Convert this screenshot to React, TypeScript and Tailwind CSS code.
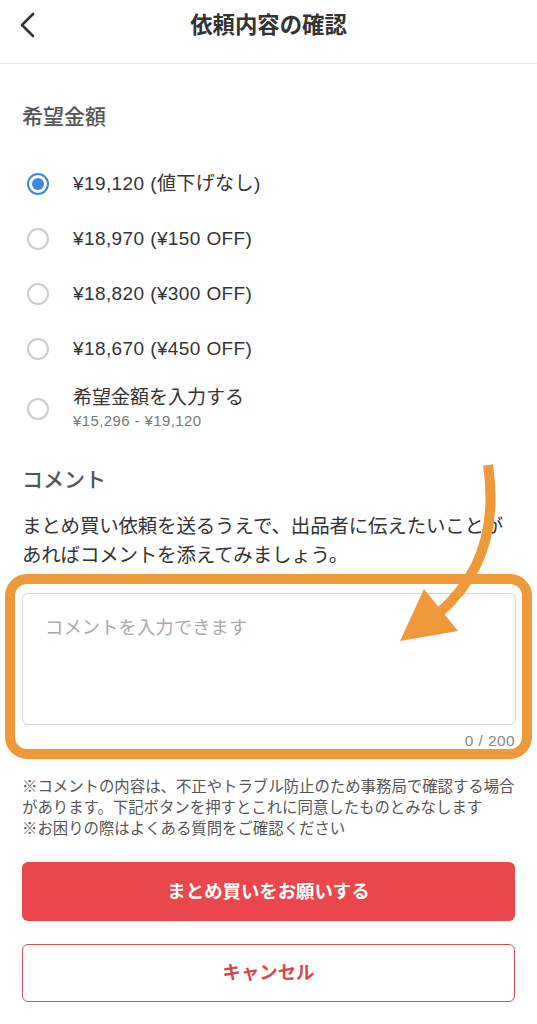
import { useState } from "react";

const options = [
  { label: "¥19,120 (値下げなし)" },
  { label: "¥18,970 (¥150 OFF)" },
  { label: "¥18,820 (¥300 OFF)" },
  { label: "¥18,670 (¥450 OFF)" },
];

function Radio({ checked }: { checked: boolean }) {
  if (checked) {
    return (
      <span className="grid size-[22px] shrink-0 place-items-center rounded-full border-2 border-[#3d87de] bg-white">
        <span className="size-[12px] rounded-full bg-[#3d87de]" />
      </span>
    );
  }
  return <span className="size-[22px] shrink-0 rounded-full border-2 border-[#cdcdcd] bg-white" />;
}

export default function App() {
  const [selected, setSelected] = useState(0);
  const [comment, setComment] = useState("");

  return (
    <div
      className="relative min-h-[1024px] w-[537px] overflow-hidden bg-white text-[#333]"
      style={{ fontFamily: '"Liberation Sans", "Noto Sans CJK JP", sans-serif' }}
    >
      {/* header */}
      <header className="relative flex h-[64px] items-start justify-center border-b border-[#e8e8e8] pt-[11px]">
        <button className="absolute left-[16px] top-[10px] grid h-[30px] w-[24px] place-items-center" aria-label="戻る">
          <svg width="16" height="26" viewBox="0 0 16 26" fill="none">
            <polyline points="13,2 2,13 13,24" stroke="#333" strokeWidth="2.6" strokeLinecap="round" strokeLinejoin="round" />
          </svg>
        </button>
        <h1 className="text-[22.4px] leading-[30px] font-semibold text-[#333]">依頼内容の確認</h1>
      </header>

      <main className="px-[22px]">
        <h2 className="pt-[39px] text-[21px] leading-[28px] font-medium text-[#555]">希望金額</h2>

        <div className="mt-[25px]">
          {options.map((o, i) => (
            <button
              key={o.label}
              onClick={() => setSelected(i)}
              className="flex h-[55px] w-full items-center gap-[24px] pl-[5px] text-left"
            >
              <Radio checked={selected === i} />
              <span className="text-[19px] leading-[24px] tracking-[0.4px]">{o.label}</span>
            </button>
          ))}
          <button
            onClick={() => setSelected(4)}
            className="flex w-full items-center gap-[24px] py-[10px] pl-[5px] text-left"
          >
            <Radio checked={selected === 4} />
            <span className="flex flex-col">
              <span className="text-[19px] leading-[24px]">希望金額を入力する</span>
              <span className="text-[15px] leading-[22px] tracking-[0.4px] text-[#777]">¥15,296 - ¥19,120</span>
            </span>
          </button>
        </div>

        <h2 className="mt-[24px] text-[21px] leading-[28px] font-medium text-[#555]">コメント</h2>
        <p className="mt-[18px] text-[19.5px] leading-[29px] tracking-[-0.2px] whitespace-nowrap">
          まとめ買い依頼を送るうえで、出品者に伝えたいことが
          <br />
          あればコメントを添えてみましょう。
        </p>

        <div className="-mx-[17px] mt-[4px] rounded-[22px] border-[10px] border-[#f0993a] pt-[9px] pr-[6px] pl-[7px]">
          <textarea
            value={comment}
            onChange={(e) => setComment(e.target.value)}
            placeholder="コメントを入力できます"
            className="block h-[132px] w-full resize-none rounded-[6px] border-[1.5px] border-[#d6d6d6] px-[22px] py-[21px] text-[18.4px] leading-[26px] outline-none placeholder:text-[#aaa]"
          />
          <div className="mt-[7px] pr-[1px] text-right text-[15.5px] leading-[17px] tracking-[0.4px] text-[#888]">
            {comment.length} / 200
          </div>
        </div>

        <p className="mt-[17px] text-[15.4px] leading-[21px] whitespace-nowrap text-[#555]">
          ※コメントの内容は、不正やトラブル防止のため事務局で確認する場合
          <br />
          があります。下記ボタンを押すとこれに同意したものとみなします
          <br />
          ※お困りの際はよくある質問をご確認ください
        </p>

        <button className="mt-[23px] flex h-[59px] w-full items-center justify-center rounded-[6px] bg-[#e9474c] text-[18.4px] font-bold text-white">
          まとめ買いをお願いする
        </button>
        <button className="mt-[23px] flex h-[58px] w-full items-center justify-center rounded-[6px] border-[1.5px] border-[#c8545a] bg-white text-[18.4px] font-bold text-[#d8464b]">
          キャンセル
        </button>
      </main>

      {/* annotation arrow */}
      <svg className="pointer-events-none absolute top-0 left-0" width="537" height="1024" viewBox="0 0 537 1024">
        <path d="M488 465 C 497 525, 482 575, 440 612" stroke="#f0993a" strokeWidth="10" fill="none" strokeLinecap="butt" />
        <polygon points="400,641 424,589 458,631" fill="#f0993a" />
      </svg>
    </div>
  );
}
